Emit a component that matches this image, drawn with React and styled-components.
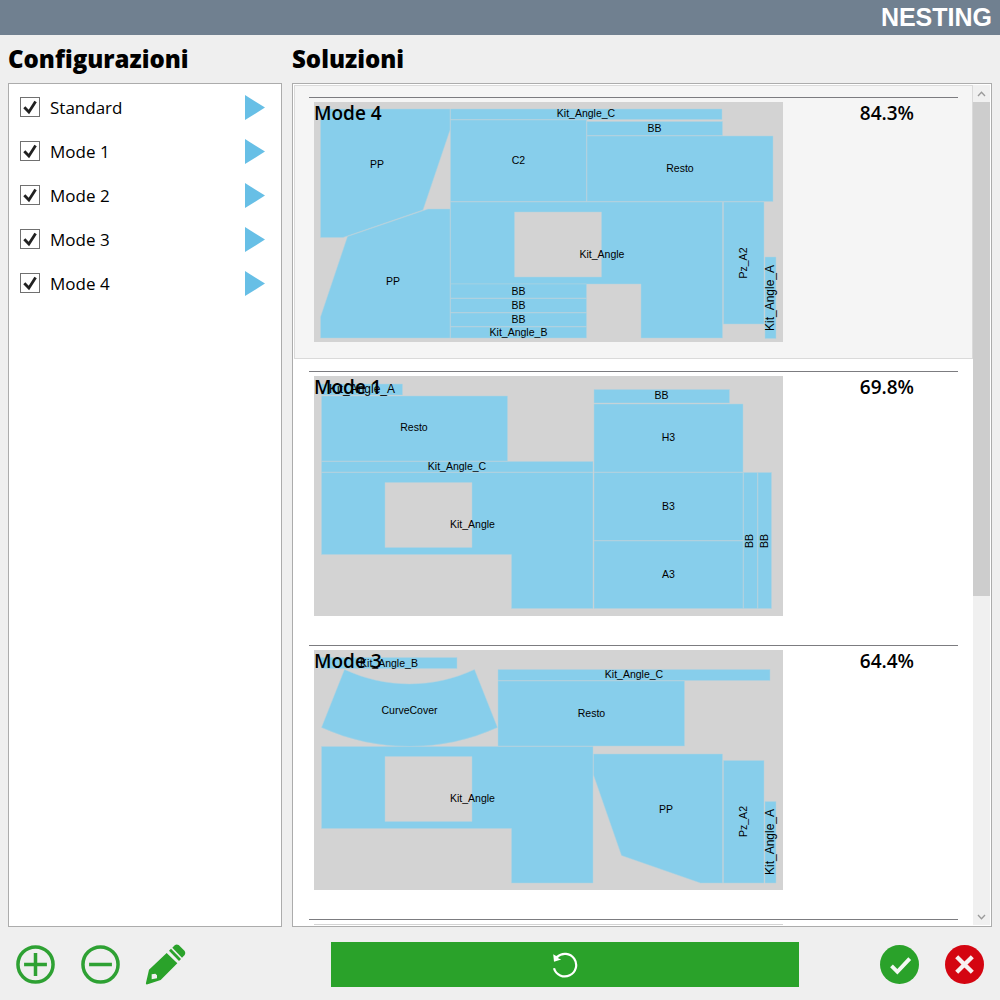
import React, { useEffect, useRef, useState } from "react";
import styled, { createGlobalStyle } from "styled-components";

const configurations = ["Standard", "Mode 1", "Mode 2", "Mode 3", "Mode 4"];

// piece outlines are in sheet units, the sheet is 938 x 480
const rect = (x1, y1, x2, y2) => `M${x1} ${y1}H${x2}V${y2}H${x1}Z`;

const solutions = [
  {
    id: 1,
    name: "Mode 4",
    usage: "84.3%",
    pieces: [
      { label: "PP", x: 126, y: 124, d: "M13 14H272V56L218 216L58 271H13Z" },
      { label: "PP", x: 158, y: 358, d: "M272 214H228L67 269L13 430V472H272Z" },
      { label: "Kit_Angle_C", x: 544, y: 23, d: rect(273, 14, 816, 35) },
      { label: "C2", x: 409, y: 117, d: rect(273, 36, 545, 199) },
      { label: "BB", x: 681, y: 52, d: rect(546, 39, 817, 67) },
      { label: "Resto", x: 732, y: 132, d: rect(546, 68, 918, 199) },
      {
        label: "Kit_Angle",
        x: 576,
        y: 304,
        d: "M273 200H817V472H654V364H273Z M401 220V350H575V220Z",
      },
      { label: "BB", x: 409, y: 378, d: rect(273, 364, 545, 392) },
      { label: "BB", x: 409, y: 406, d: rect(273, 393, 545, 421) },
      { label: "BB", x: 409, y: 435, d: rect(273, 422, 545, 449) },
      { label: "Kit_Angle_B", x: 409, y: 460, d: rect(273, 450, 545, 472) },
      { label: "Pz_A2", x: 858, y: 322, vertical: true, d: rect(819, 200, 900, 444) },
      {
        label: "Kit_Angle_A",
        x: 912,
        y: 392,
        vertical: true,
        large: true,
        d: rect(902, 310, 924, 473),
      },
    ],
  },
  {
    id: 2,
    name: "Mode 1",
    usage: "69.8%",
    pieces: [
      { label: "Kit_Angle_A", x: 96, y: 26, large: true, d: rect(15, 16, 177, 38) },
      { label: "Resto", x: 200, y: 103, d: rect(15, 40, 387, 170) },
      { label: "Kit_Angle_C", x: 286, y: 181, d: rect(15, 171, 558, 192) },
      {
        label: "Kit_Angle",
        x: 317,
        y: 297,
        d: "M15 193H558V465H395V357H15Z M142 213V343H316V213Z",
      },
      { label: "BB", x: 695, y: 39, d: rect(560, 27, 831, 54) },
      { label: "H3", x: 709, y: 122, d: rect(560, 56, 858, 192) },
      { label: "B3", x: 709, y: 260, d: rect(560, 193, 858, 329) },
      { label: "A3", x: 709, y: 397, d: rect(560, 330, 858, 465) },
      { label: "BB", x: 871, y: 330, vertical: true, d: rect(859, 193, 887, 465) },
      { label: "BB", x: 900, y: 330, vertical: true, d: rect(888, 193, 915, 465) },
    ],
  },
  {
    id: 3,
    name: "Mode 3",
    usage: "64.4%",
    pieces: [
      { label: "Kit_Angle_B", x: 150, y: 26, d: rect(14, 15, 286, 37) },
      {
        label: "CurveCover",
        x: 191,
        y: 121,
        d: "M61 39A306 306 0 0 0 321 39L367 155A427 427 0 0 1 15 155Z",
      },
      { label: "Kit_Angle_C", x: 640, y: 49, d: rect(368, 39, 912, 61) },
      { label: "Resto", x: 555, y: 127, d: rect(368, 62, 741, 192) },
      {
        label: "Kit_Angle",
        x: 317,
        y: 297,
        d: "M15 193H558V466H395V357H15Z M142 213V343H316V213Z",
      },
      { label: "PP", x: 704, y: 319, d: "M559 208H817V466H773L615 411L559 250Z" },
      { label: "Pz_A2", x: 858, y: 343, vertical: true, d: rect(819, 221, 900, 466) },
      {
        label: "Kit_Angle_A",
        x: 912,
        y: 384,
        vertical: true,
        large: true,
        d: rect(902, 303, 924, 466),
      },
    ],
  },
  { id: 4, pieces: [] },
  { id: 5, pieces: [] },
];

const Sheet = ({ pieces }) => (
  <SheetSvg viewBox="0 0 938 480">
    <rect width="938" height="480" fill="#d3d3d3" />
    {pieces.map((el, index) => (
      <path key={index} d={el.d} className="piece" />
    ))}
    {pieces.map((el, index) => (
      <text
        key={index}
        x={el.x}
        y={el.y}
        dy={el.large ? 8 : 7}
        fontSize={el.large ? 24 : 21}
        transform={el.vertical ? `rotate(-90 ${el.x} ${el.y})` : undefined}
      >
        {el.label}
      </text>
    ))}
  </SheetSvg>
);

const ConfigItem = ({ name }) => {
  const [checked, setChecked] = useState(true);

  return (
    <ConfigRow>
      <label>
        <CheckWrap>
          <input
            type="checkbox"
            checked={checked}
            onChange={() => setChecked(!checked)}
          />
          {checked && (
            <svg viewBox="0 0 20 20">
              <path d="M4.3 10.2L8.9 15L15.6 4.6" />
            </svg>
          )}
        </CheckWrap>
        <span>{name}</span>
      </label>
      <PlainButton aria-label={`Avvia ${name}`}>
        <svg width="20" height="25" viewBox="0 0 20 25">
          <path d="M0 0L20 12.5L0 25Z" fill="#67bfe6" />
        </svg>
      </PlainButton>
    </ConfigRow>
  );
};

const SolutionList = () => {
  const listRef = useRef(null);
  const [selected, setSelected] = useState(1);
  const [thumb, setThumb] = useState({ top: 0, height: 60 });

  const updateThumb = () => {
    const el = listRef.current;
    setThumb({
      top: (el.scrollTop / el.scrollHeight) * 100,
      height: (el.clientHeight / el.scrollHeight) * 100,
    });
  };

  const handleScroll = (amount) => {
    listRef.current.scrollTop += amount;
  };

  useEffect(() => {
    updateThumb();
    window.addEventListener("resize", updateThumb);
    return () => window.removeEventListener("resize", updateThumb);
  }, []);

  return (
    <ListFrame>
      <List ref={listRef} onScroll={updateThumb}>
        {solutions.map((el) => (
          <SolutionItem
            key={el.id}
            $selected={el.id === selected}
            onClick={() => setSelected(el.id)}
          >
            <div className="content">
              <div className="sheet">
                <Sheet pieces={el.pieces} />
                {el.name && <p className="name">{el.name}</p>}
              </div>
              <p className="usage">{el.usage}</p>
            </div>
          </SolutionItem>
        ))}
      </List>
      <ScrollBar>
        <button aria-label="Su" onClick={() => handleScroll(-40)}>
          <svg width="9" height="6" viewBox="0 0 9 6">
            <path d="M1 5L4.5 1.2L8 5" />
          </svg>
        </button>
        <div className="track">
          <div
            className="thumb"
            style={{ top: `${thumb.top}%`, height: `${thumb.height}%` }}
          />
        </div>
        <button aria-label="Giù" onClick={() => handleScroll(40)}>
          <svg width="9" height="6" viewBox="0 0 9 6">
            <path d="M1 1L4.5 4.8L8 1" />
          </svg>
        </button>
      </ScrollBar>
    </ListFrame>
  );
};

export default function App() {
  return (
    <>
      <GlobalStyle />
      <Page>
        <TitleBar>
          <h1>NESTING</h1>
        </TitleBar>

        <Main>
          <Column>
            <Heading>Configurazioni</Heading>
            <ConfigList>
              {configurations.map((name) => (
                <ConfigItem key={name} name={name} />
              ))}
            </ConfigList>
          </Column>
          <Column>
            <Heading>Soluzioni</Heading>
            <SolutionList />
          </Column>
        </Main>

        <Footer>
          <div className="actions left">
            <PlainButton aria-label="Aggiungi">
              <svg width="39" height="39" viewBox="0 0 40 40">
                <g fill="none" stroke="#2ea133" strokeWidth="3.6">
                  <circle cx="20" cy="20" r="18" />
                  <path d="M8.3 20H31.7M20 8.3V31.7" />
                </g>
              </svg>
            </PlainButton>
            <PlainButton aria-label="Rimuovi">
              <svg width="39" height="39" viewBox="0 0 40 40">
                <g fill="none" stroke="#2ea133" strokeWidth="3.6">
                  <circle cx="20" cy="20" r="18" />
                  <path d="M8.3 20H31.7" />
                </g>
              </svg>
            </PlainButton>
            <PlainButton aria-label="Modifica">
              <svg width="41" height="41" viewBox="0 0 123 123">
                <g fill="#2aa22a">
                  <path d="M82 11L90 3Q95 0 101 3L119 21Q123 27 119 33L111 41Z" />
                  <path d="M72 20L78 14L108 45L102 51Z" />
                  <path
                    fillRule="evenodd"
                    d="M65 27L97 58L47 108L8 121Q1 123 3 116L12 77ZM20 91L31 89L36 94V103L20 106Z"
                  />
                </g>
              </svg>
            </PlainButton>
          </div>

          <RunButton aria-label="Ricalcola">
            <svg width="26" height="26" viewBox="0 0 26 26">
              <path
                d="M2 16.2A11.3 11.3 0 1 0 5 5"
                fill="none"
                stroke="#fff"
                strokeWidth="2.2"
              />
              <path d="M1.2 2.2L3.8 3.8L6.4 4.2L6.2 6.2L9.2 7.6L2 9.8Z" fill="#fff" />
            </svg>
          </RunButton>

          <div className="actions">
            <PlainButton aria-label="Conferma">
              <svg width="39" height="39" viewBox="0 0 40 40">
                <circle cx="20" cy="20" r="20" fill="#2aa22a" />
                <path
                  d="M11.8 21.5L17.8 27.5L30.5 14"
                  fill="none"
                  stroke="#f4f8f4"
                  strokeWidth="4"
                />
              </svg>
            </PlainButton>
            <PlainButton aria-label="Annulla">
              <svg width="39" height="39" viewBox="0 0 40 40">
                <circle cx="20" cy="20" r="20" fill="#d40511" />
                <path
                  d="M12 12L28 28M28 12L12 28"
                  fill="none"
                  stroke="#f8f0f0"
                  strokeWidth="4.4"
                />
              </svg>
            </PlainButton>
          </div>
        </Footer>
      </Page>
    </>
  );
}

const GlobalStyle = createGlobalStyle`
  * {
    box-sizing: border-box;
  }
  body {
    margin: 0;
    background-color: #efefef;
    color: black;
    font-family: "Open Sans", "Noto Sans", sans-serif;
  }
  h1, h2, p, ul {
    margin: 0;
    padding: 0;
  }
`;

const Page = styled.div`
  display: flex;
  flex-direction: column;
  height: 100vh;
`;

const TitleBar = styled.header`
  display: flex;
  align-items: center;
  justify-content: flex-end;
  height: 35px;
  padding: 0 8px;
  background-color: #708090;

  h1 {
    font-family: "Liberation Sans", sans-serif;
    font-size: 25px;
    font-weight: bold;
    line-height: 35px;
    color: white;
  }
`;

const Main = styled.main`
  display: grid;
  grid-template-columns: 274px minmax(0, 1fr);
  gap: 10px;
  flex: 1;
  min-height: 0;
  padding: 0 8px;
`;

const Column = styled.section`
  display: flex;
  flex-direction: column;
  min-height: 0;
`;

const Heading = styled.h2`
  height: 48px;
  font-size: 24px;
  font-weight: 800;
  line-height: 48px;
`;

const ConfigList = styled.ul`
  flex: 1;
  padding: 1px;
  border: 1px solid #acacac;
  background-color: white;
  list-style: none;
`;

const ConfigRow = styled.li`
  display: flex;
  align-items: center;
  justify-content: space-between;
  height: 44px;
  padding: 0 15px 0 10px;

  label {
    display: flex;
    align-items: center;
    gap: 10px;
    font-size: 17px;
  }
`;

const CheckWrap = styled.span`
  position: relative;
  width: 20px;
  height: 20px;

  input {
    appearance: none;
    display: block;
    width: 20px;
    height: 20px;
    margin: 0;
    border: 1px solid #707070;
    background-color: white;
  }

  svg {
    position: absolute;
    inset: 0;
    fill: none;
    stroke: #212121;
    stroke-width: 2.8;
    pointer-events: none;
  }
`;

const PlainButton = styled.button`
  display: flex;
  align-items: center;
  justify-content: center;
  padding: 0;
  border: none;
  background: none;
  cursor: pointer;
`;

const ListFrame = styled.div`
  display: flex;
  flex: 1;
  min-height: 0;
  padding: 1px;
  border: 1px solid #acacac;
  background-color: white;
`;

const List = styled.ul`
  flex: 1;
  overflow-y: auto;
  scrollbar-width: none;
  list-style: none;
`;

const SolutionItem = styled.li`
  padding: 11px 14px;
  border: 1px solid ${(props) => (props.$selected ? "#dadada" : "transparent")};
  background-color: ${(props) => (props.$selected ? "#f5f5f5" : "white")};

  .content {
    display: flex;
    padding: 4px 0 5px 5px;
    border-top: 1px solid #7c7c80;
  }
  .sheet {
    position: relative;
    flex: 1;
  }
  .name,
  .usage {
    font-size: 19px;
    font-weight: 600;
    line-height: 22px;
  }
  .name {
    position: absolute;
    top: 0;
    left: 0;
  }
  .usage {
    width: 175px;
    padding-right: 44px;
    text-align: right;
  }
`;

const SheetSvg = styled.svg`
  display: block;
  width: 100%;

  .piece {
    fill: #87ceeb;
    stroke: #b2d2df;
    stroke-width: 1;
  }
  text {
    font-family: "Liberation Sans", sans-serif;
    text-anchor: middle;
  }
`;

const ScrollBar = styled.div`
  display: flex;
  flex-direction: column;
  width: 17px;
  background-color: #f0f0f0;

  button {
    display: flex;
    align-items: center;
    justify-content: center;
    height: 17px;
    padding: 0;
    border: none;
    background: none;
  }
  svg {
    fill: none;
    stroke: #9a9a9a;
    stroke-width: 1.3;
  }
  .track {
    flex: 1;
  }
  .thumb {
    position: relative;
    background-color: #cdcdcd;
  }
`;

const Footer = styled.footer`
  display: flex;
  align-items: center;
  height: 73px;
  padding: 2px 3px 0;

  .actions {
    display: flex;
  }
  .actions.left {
    width: 260px;
  }
  .actions button {
    width: 65px;
    height: 45px;
  }
`;

const RunButton = styled.button`
  display: flex;
  align-items: center;
  justify-content: center;
  flex: 1;
  height: 45px;
  margin: 0 68px;
  border: none;
  background-color: #2aa22a;
`;
